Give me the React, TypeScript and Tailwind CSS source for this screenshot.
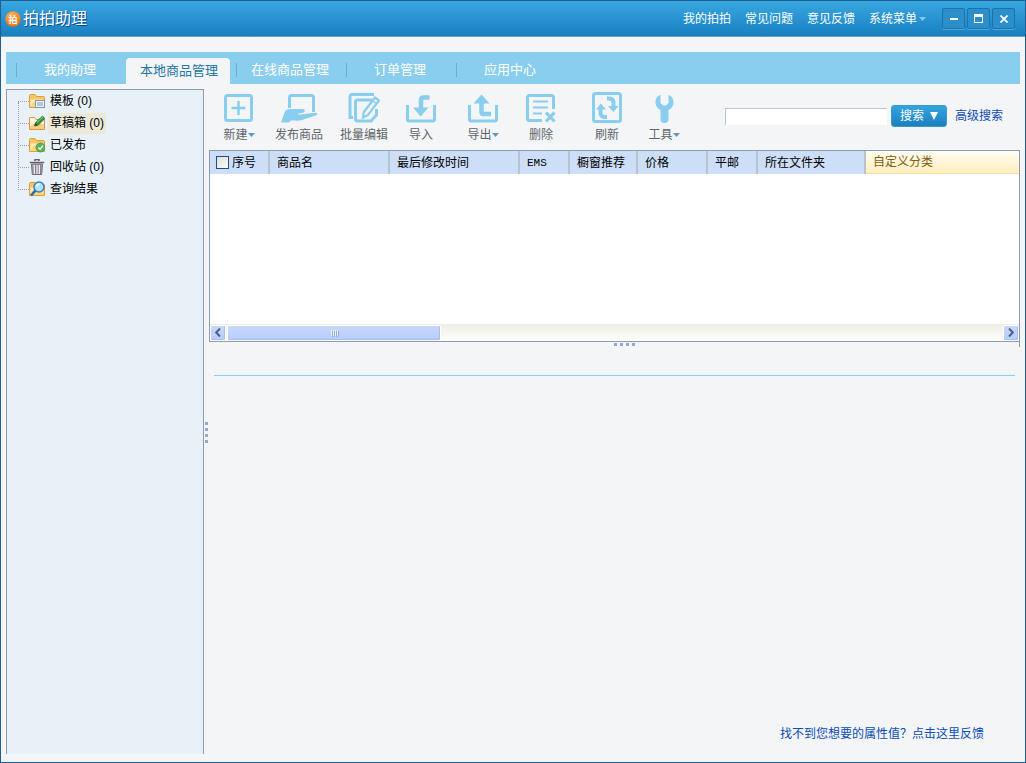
import type { ReactNode } from "react";

type IconProps = { children: ReactNode };

function ToolIcon({ children }: IconProps) {
  return (
    <svg
      viewBox="0 0 32 32"
      className="h-8 w-8 shrink-0"
      fill="none"
      stroke="#89cdef"
      strokeWidth="3"
      aria-hidden="true"
    >
      {children}
    </svg>
  );
}

const newIcon = (
  <ToolIcon>
    <rect x="2.5" y="3.5" width="26" height="25" rx="2" />
    <path d="M15.500 9v14M8.500 16h14" strokeWidth="2.500" />
  </ToolIcon>
);

const publishIcon = (
  <svg viewBox="0 0 38 32" className="h-8 w-[38px] shrink-0" aria-hidden="true">
    <path
      d="M9.500 16V5.500a2 2 0 0 1 2-2h20a2 2 0 0 1 2 2V20"
      fill="none"
      stroke="#89cdef"
      strokeWidth="3"
    />
    <path
      d="M1 30.500 5 19.500q1-2.500 4-2.500h13.500c3 0 3 3.500 0 3.800l-4.500.9v1l17-2c2.500-.2 3 2.200.8 2.900L22 28c-4 1.200-7 .5-11 .5l-2 2z"
      fill="#89cdef"
    />
  </svg>
);

const batchIcon = (
  <ToolIcon>
    <path d="M5 25.500H2V4.500a2 2 0 0 1 2-2h22" />
    <path d="M24.500 8H9.500a2 2 0 0 0-2 2v17a2 2 0 0 0 2 2H23l5.500-6v-6" />
    <path d="m27 5.500 4 3L20 23l-5 2.500.8-5.500z" strokeWidth="2.200" fill="#f3f5f7" />
    <path d="m24.500 8.500 4 3" strokeWidth="1.500" />
  </ToolIcon>
);

const importIcon = (
  <ToolIcon>
    <path d="M2.500 13v14.500a1.500 1.500 0 0 0 1.500 1.500h24a1.500 1.500 0 0 0 1.500-1.500V13" />
    <path d="M24.500 5.500H18.500q-2.500 0-2.500 3V18" strokeWidth="4.500" />
    <path d="M8 15.500h15.500L15.700 24.500z" fill="#89cdef" stroke="none" />
  </ToolIcon>
);

const exportIcon = (
  <ToolIcon>
    <path d="M2.500 13v14.500a1.500 1.500 0 0 0 1.500 1.500h24a1.500 1.500 0 0 0 1.500-1.500V13" />
    <path d="M14.500 9v11q0 2 2 2H24" strokeWidth="4.500" />
    <path d="M6.500 11.500h16L14.500 2.500z" fill="#89cdef" stroke="none" />
  </ToolIcon>
);

const deleteIcon = (
  <ToolIcon>
    <path d="M17 28.500H4.500a2 2 0 0 1-2-2v-21a2 2 0 0 1 2-2h22a2 2 0 0 1 2 2V17" />
    <path d="M8 9.500h15M8 15.500h15M8 21.500h9" strokeWidth="2.200" />
    <path d="m21 20.500 8.500 9m0-9-8.500 9" strokeWidth="3.200" />
  </ToolIcon>
);

const refreshIcon = (
  <ToolIcon>
    <rect x="2.500" y="1.500" width="27" height="28" rx="2" />
    <path d="M16 25h-2.500c-2.500 0-4-1.800-4-4.500v-5M16 6.500h2.500c2.500 0 4 1.800 4 4.500v5" strokeWidth="4" />
    <path d="M5 17.500 9.800 11.500l5.200 6zM17 14h10.500l-5 6z" fill="#89cdef" stroke="none" />
  </ToolIcon>
);

const toolsIcon = (
  <ToolIcon>
    <path
      d="M12.500 3v8l2.500 2.500h3l2.500-2.500V3c3.500 1 5 4 5 7.500 0 3.500-2 6-5 7.500v9.500c0 2.300-1.500 3.500-4 3.500s-4-1.200-4-3.500V18c-3-1.500-5-4-5-7.500 0-3.500 1.500-6.500 5-7.500z"
      fill="#89cdef"
      stroke="none"
    />
  </ToolIcon>
);

const tools = [
  { label: "新建", icon: newIcon, menu: true, gap: "ml-3.5" },
  { label: "发布商品", icon: publishIcon, menu: false, gap: "ml-5" },
  { label: "批量编辑", icon: batchIcon, menu: false, gap: "ml-[17px]" },
  { label: "导入", icon: importIcon, menu: false, gap: "ml-[17px]" },
  { label: "导出", icon: exportIcon, menu: true, gap: "ml-[30px]" },
  { label: "删除", icon: deleteIcon, menu: false, gap: "ml-[26px]" },
  { label: "刷新", icon: refreshIcon, menu: false, gap: "ml-[34px]" },
  { label: "工具", icon: toolsIcon, menu: true, gap: "ml-[25px]" },
];

const tabs = ["我的助理", "本地商品管理", "在线商品管理", "订单管理", "应用中心"];
const activeTab = "本地商品管理";

const headerLinks = ["我的拍拍", "常见问题", "意见反馈"];

const columns = [
  { label: "商品名", width: "w-[120px]" },
  { label: "最后修改时间", width: "w-[130px]" },
  { label: "EMS", width: "w-[50px]" },
  { label: "橱窗推荐", width: "w-[68px]" },
  { label: "价格", width: "w-[70px]" },
  { label: "平邮", width: "w-[50px]" },
  { label: "所在文件夹", width: "w-[108px]" },
];

function FolderIcon({ children }: { children?: ReactNode }) {
  return (
    <svg viewBox="0 0 16 16" className="h-4 w-4 shrink-0" aria-hidden="true">
      <path d="M.5 14.500V2.500q0-1 1-1H6l1.500 2h7q1 0 1 1v10z" fill="#f7c766" stroke="#e39a3b" />
      <path d="M1.500 14V6.500h13V14z" fill="#fff0b4" />
      <path d="M1.500 14 4 8.500h10.500V14z" fill="#fbd981" />
      {children}
    </svg>
  );
}

const folders = [
  {
    label: "模板 (0)",
    selected: false,
    icon: (
      <FolderIcon>
        <rect x="6.500" y="7.500" width="9" height="7" fill="#eef5fc" stroke="#8096ad" />
        <path d="M8 10h6M8 12h6" stroke="#7393bd" />
      </FolderIcon>
    ),
  },
  {
    label: "草稿箱 (0)",
    selected: true,
    icon: (
      <svg viewBox="0 0 16 16" className="h-4 w-4 shrink-0" aria-hidden="true">
        <path d="M.5 14.500v-12h5l1.500 2h8.500v10z" fill="#fff6df" stroke="#e8913b" />
        <path d="M1 14v-3l4-2h10v5z" fill="#fbcf80" />
        <path d="m5.500 11 1-3.500 7-6.500L16 3.500l-7 7z" fill="#35933b" stroke="#246b2b" strokeWidth=".6" />
        <path d="m5.500 11 1-3 2 2z" fill="#433" />
        <path d="m8 7.500 6-5.500" stroke="#8cd07b" />
      </svg>
    ),
  },
  {
    label: "已发布",
    selected: false,
    icon: (
      <FolderIcon>
        <circle cx="11.500" cy="10.500" r="4.500" fill="#58b455" stroke="#3c9141" strokeWidth=".7" />
        <path d="m9.300 10.500 1.700 1.800 3-3.500" stroke="#fff" strokeWidth="1.400" fill="none" />
      </FolderIcon>
    ),
  },
  {
    label: "回收站 (0)",
    selected: false,
    icon: (
      <svg viewBox="0 0 16 16" className="h-4 w-4 shrink-0" aria-hidden="true">
        <path d="M6 2V.500h4V2M.8 3.500h14.400" stroke="#66616a" strokeWidth="1.600" fill="none" />
        <path d="M2.500 5h11l-.8 10.500H3.300z" fill="#aaa5ae" stroke="#706b75" />
        <path d="M5.500 6v9M8 6v9M10.500 6v9" stroke="#ece9ef" />
        <path d="M6.500 6v9M11.500 6v9" stroke="#78727f" strokeWidth=".7" />
      </svg>
    ),
  },
  {
    label: "查询结果",
    selected: false,
    icon: (
      <FolderIcon>
        <path d="m6.500 9.500-4.500 5" stroke="#2768ad" strokeWidth="2.600" />
        <circle cx="10" cy="6" r="5" fill="#b5e3fa" stroke="#367fc2" strokeWidth="1.500" />
        <path d="M7.500 5.500q1-2.500 3.500-2.500" stroke="#fff" strokeWidth="1.200" fill="none" />
      </FolderIcon>
    ),
  },
];

function Caret({ className }: { className: string }) {
  return (
    <svg viewBox="0 0 7 4" className={className} aria-hidden="true">
      <path d="M0 0h7L3.500 4z" fill="currentColor" />
    </svg>
  );
}

function Dots({ vertical = false }: { vertical?: boolean }) {
  return (
    <div className={vertical ? "flex flex-col gap-[3px]" : "flex gap-[3px]"}>
      {[0, 1, 2, 3].map((n) => (
        <span key={n} className="h-[3px] w-[3px] bg-[#9aa5cb]" />
      ))}
    </div>
  );
}

const windowButton =
  "flex h-[21px] w-[23px] items-center justify-center rounded-[2px] border border-[#1c72ad] bg-[#2d8fca] shadow-[0_1px_0_#4aa9dc]";

function TitleBar() {
  return (
    <header className="flex h-9 items-center border-b border-[#6c9fc4] bg-linear-to-b from-[#38a7e2] to-[#1780c0] pr-2.5 pl-1 text-white">
      <svg viewBox="0 0 16 16" className="h-4 w-4" aria-hidden="true">
        <defs>
          <radialGradient id="logo" cx=".4" cy=".25" r=".8">
            <stop offset="0" stopColor="#ffb45c" />
            <stop offset="1" stopColor="#e8690f" />
          </radialGradient>
        </defs>
        <circle cx="8" cy="8" r="7.800" fill="url(#logo)" />
        <text x="8" y="11.500" fontSize="9" fontWeight="bold" textAnchor="middle" fill="#fff">
          拍
        </text>
      </svg>
      <h1 className="ml-0.5 text-base [text-shadow:1px_1px_0_#0d4f94]">拍拍助理</h1>
      <nav className="ml-auto flex items-center gap-3.5">
        {headerLinks.map((label) => (
          <a key={label} href="#">
            {label}
          </a>
        ))}
        <button type="button" className="flex items-center gap-0.5">
          系统菜单
          <Caret className="h-1 w-[7px] text-[#86cbee]" />
        </button>
      </nav>
      <div className="ml-4 flex gap-0.5">
        <button type="button" aria-label="最小化" className={windowButton}>
          <span className="h-0.5 w-2 bg-white" />
        </button>
        <button type="button" aria-label="最大化" className={windowButton}>
          <span className="h-[9px] w-[9px] border border-t-[3px] border-white" />
        </button>
        <button type="button" aria-label="关闭" className={windowButton}>
          <svg viewBox="0 0 8 8" className="h-2 w-2" stroke="#fff" strokeWidth="1.700" aria-hidden="true">
            <path d="m.5.5 7 7m0-7-7 7" />
          </svg>
        </button>
      </div>
    </header>
  );
}

function TabBar() {
  return (
    <nav className="mx-[5px] mt-[15px] flex h-8 bg-[#89cdef] pl-2.5 text-[13px]">
      {tabs.map((label) =>
        label === activeTab ? (
          <a
            key={label}
            href="#"
            aria-current="page"
            className="mt-1.5 mr-1.5 flex w-[104px] items-center justify-center rounded-t-sm bg-[#f3f5f7] pl-0.5 text-[#2474a5]"
          >
            {label}
          </a>
        ) : (
          <a key={label} href="#" className="relative flex w-[110px] items-center justify-center pt-1 pr-0.5 text-white">
            <span className="absolute top-[11px] left-0 h-3.5 w-px bg-[#63afd8]" />
            {label}
          </a>
        ),
      )}
    </nav>
  );
}

function Sidebar() {
  return (
    <aside className="w-[198px] shrink-0 border border-b-0 border-[#8a9db5] bg-[#e8f0f8]">
      <ul className="relative pl-[11px]">
        <li aria-hidden="true" className="absolute top-3 left-[11px] h-[88px] border-l border-dotted border-[#97a0aa]" />
        {folders.map((folder) => (
          <li key={folder.label} className="flex h-[22px] items-center">
            <span className="w-[11px] border-t border-dotted border-[#97a0aa]" />
            {folder.icon}
            <a
              href="#"
              className={
                folder.selected
                  ? "ml-[3px] flex h-[21px] items-center bg-[#ece9d8] px-0.5"
                  : "ml-[3px] flex h-[21px] items-center px-0.5"
              }
            >
              {folder.label}
            </a>
          </li>
        ))}
      </ul>
    </aside>
  );
}

function Toolbar() {
  return (
    <div className="flex h-[61px] items-start pt-[3px]">
      {tools.map((tool) => (
        <button
          key={tool.label}
          type="button"
          className={`flex shrink-0 flex-col items-center gap-0.5 text-[#5f666c] ${tool.gap}`}
        >
          {tool.icon}
          <span className="flex h-[18px] items-center">
            {tool.label}
            {tool.menu && <Caret className="h-1 w-[7px] text-[#5b9acb]" />}
          </span>
        </button>
      ))}
      <form className="mt-[13px] mr-[17px] ml-auto flex items-center" onSubmit={(e) => e.preventDefault()}>
        <input
          type="text"
          aria-label="搜索商品"
          className="h-[17px] w-[162px] border-t border-l border-[#b4c7d6] bg-white px-1 outline-none"
        />
        <button
          type="submit"
          className="ml-1 flex h-[22px] w-14 items-center justify-center gap-1.5 rounded-[3px] border border-[#3a98ce] bg-linear-to-b from-[#35a4de] to-[#1a80be] text-white"
        >
          搜索
          <svg viewBox="0 0 8 8" className="h-2 w-2" aria-hidden="true">
            <path d="M0 0h8L4 8z" fill="#fff" />
          </svg>
        </button>
        <a href="#" className="ml-2 text-[#0a4cb8]">
          高级搜索
        </a>
      </form>
    </div>
  );
}

const scrollPiece =
  "flex items-center justify-center rounded-[2px] border border-white bg-linear-to-b from-[#c9d6fc] to-[#b6cdfb] shadow-[inset_-1px_-1px_0_#a5bdf0]";

function ProductTable() {
  return (
    <div className="flex h-48 flex-col border border-[#8a9db5] bg-white">
      <div className="flex-1 overflow-hidden">
        <table className="w-full table-fixed border-separate border-spacing-0 text-left">
          <thead>
            <tr className="h-[23px] bg-[#cddff8]">
              <th className="w-[60px] border-r-2 border-[#b9c3cc] p-0 font-normal">
                <label className="flex items-center gap-[3px] pl-1.5">
                  <input
                    type="checkbox"
                    className="h-[13px] w-[13px] appearance-none border border-[#1c5180] bg-linear-to-br from-[#dcdcd7] to-white"
                  />
                  序号
                </label>
              </th>
              {columns.map((column) => (
                <th
                  key={column.label}
                  className={`border-r-2 border-[#b9c3cc] p-0 pl-[7px] font-normal whitespace-nowrap ${column.width}`}
                >
                  {column.label === "EMS" ? (
                    <span className="font-['Liberation_Mono',monospace] text-[11px]">EMS</span>
                  ) : (
                    column.label
                  )}
                </th>
              ))}
              <th className="border-b border-[#f3dfa4] bg-linear-to-b from-[#fffdf2] to-[#ffefbd] p-0 pl-[7px] font-normal text-[#815d12]">
                自定义分类
              </th>
            </tr>
          </thead>
          <tbody />
        </table>
      </div>
      <div className="flex h-[17px] items-center justify-between bg-linear-to-b from-[#eeede5] to-[#fefefb]">
        <button type="button" aria-label="向左滚动" className={`h-4 w-4 ${scrollPiece}`}>
          <svg viewBox="0 0 6 9" className="h-[9px] w-1.5" fill="none" stroke="#4d6185" strokeWidth="2" aria-hidden="true">
            <path d="M5 .5 1.200 4.500 5 8.500" />
          </svg>
        </button>
        <div className="flex-1 pl-px">
          <div className={`h-4 w-[214px] gap-px ${scrollPiece}`}>
            {[0, 1, 2, 3].map((n) => (
              <span key={n} className="h-1.5 w-px bg-[#eef4fe] shadow-[1px_1px_0_#8caae6]" />
            ))}
          </div>
        </div>
        <button type="button" aria-label="向右滚动" className={`h-4 w-4 ${scrollPiece}`}>
          <svg viewBox="0 0 6 9" className="h-[9px] w-1.5" fill="none" stroke="#4d6185" strokeWidth="2" aria-hidden="true">
            <path d="M1 .5 4.800 4.500 1 8.500" />
          </svg>
        </button>
      </div>
    </div>
  );
}

export default function App() {
  return (
    <div className="flex min-h-screen flex-col border border-[#1f5f90] bg-[#f3f5f7] font-['Liberation_Sans','Noto_Sans_CJK_SC',sans-serif] text-xs leading-[18px] text-black">
      <TitleBar />
      <TabBar />
      <div className="flex flex-1 px-[5px] pt-[5px] pb-2">
        <Sidebar />
        <div className="flex w-[5px] items-center justify-center pt-[22px]">
          <Dots vertical />
        </div>
        <main className="flex min-w-0 flex-1 flex-col">
          <Toolbar />
          <ProductTable />
          <div className="flex h-[5px] justify-center border-r border-[#8a9db5] pt-px pl-5">
            <Dots />
          </div>
          <div role="separator" className="mx-[5px] mt-7 h-px bg-[#89cdef]" />
          <a href="#" className="mt-auto mr-9 mb-[11px] self-end text-[#0a4cb8]">
            找不到您想要的属性值？点击这里反馈
          </a>
        </main>
      </div>
    </div>
  );
}
